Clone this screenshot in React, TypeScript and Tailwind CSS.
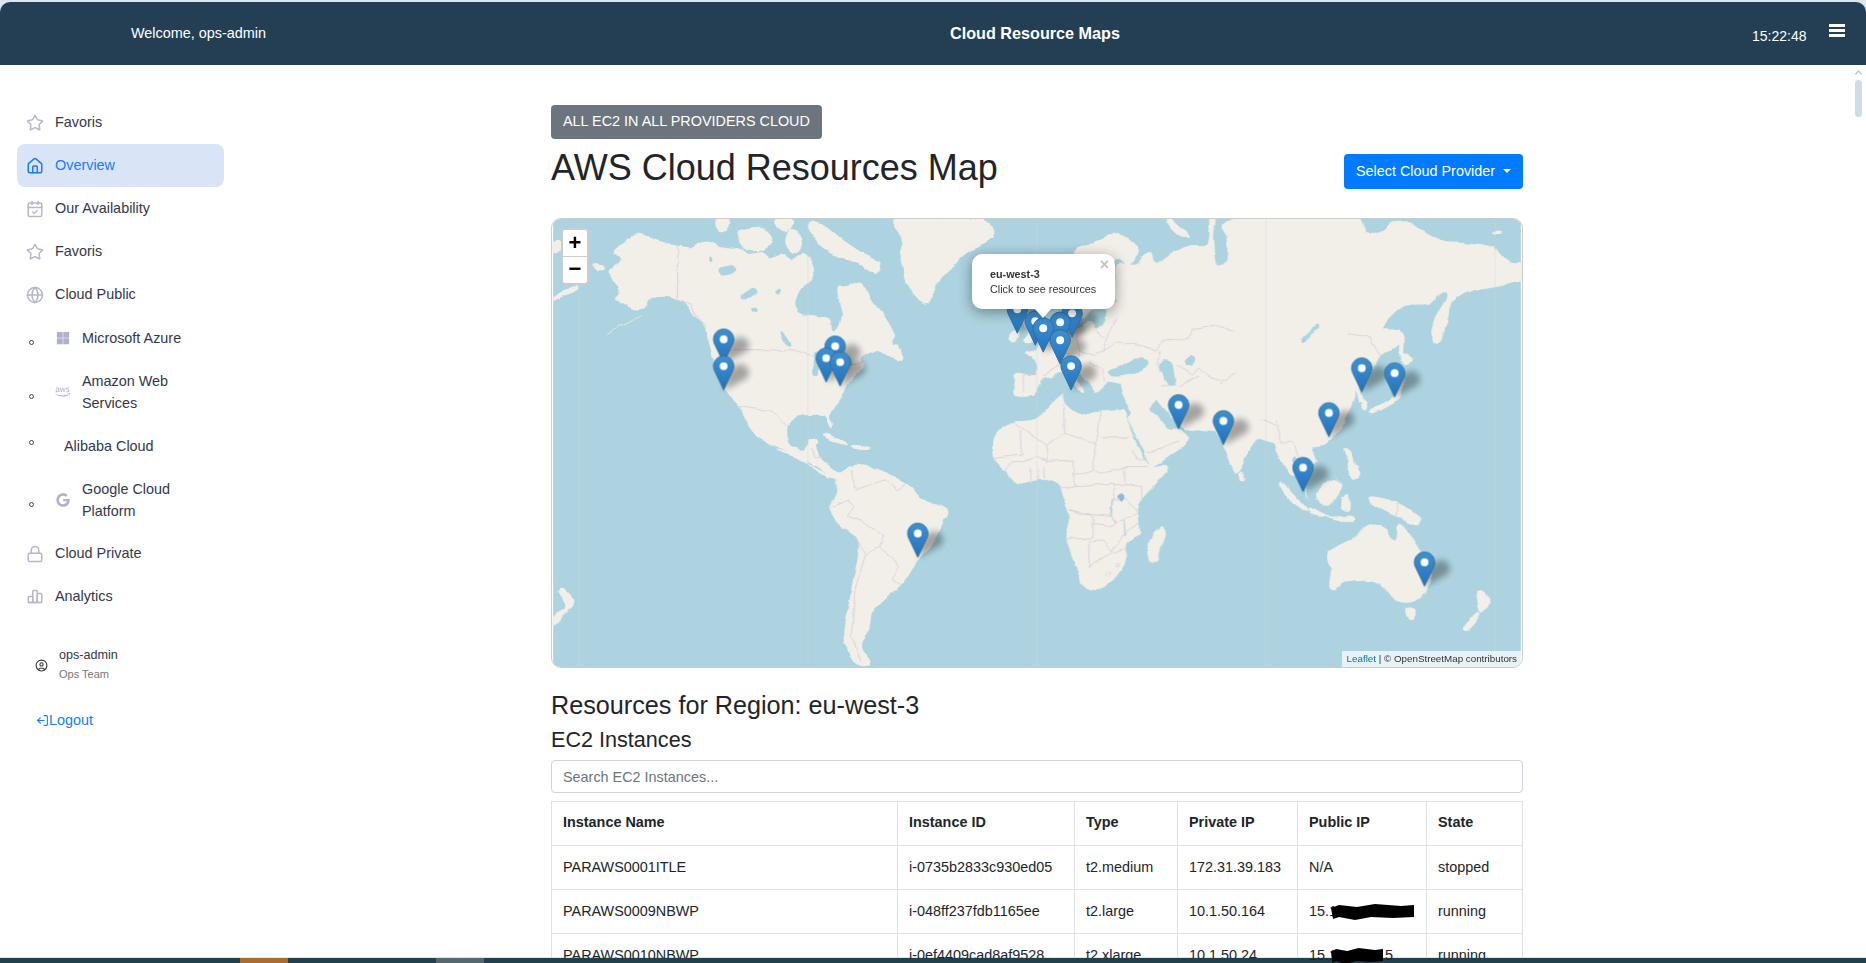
import { Star, House, CalendarCheck, Globe, Lock, CircleUser, LogOut, ChevronUp } from "lucide-react";
import { TbChartBar } from "react-icons/tb";
import { FaAws, FaGoogle, FaMicrosoft } from "react-icons/fa";
import type { ReactNode } from "react";

const LAND = "#f2efe9";
const WATER = "#acd3df";
const BORDER = "#d8c9d6";

// runs a rounded curve through the traced points, tangents clamped so short segments don't loop
function smooth(d: string) {
  const p = d.split(" ").map((s) => s.split(",").map(Number));
  const n = p.length;
  const dist = (a: number[], b: number[]) => Math.hypot(a[0] - b[0], a[1] - b[1]) || 1;
  const tan = (i: number) => {
    const a = p[(i + n - 1) % n];
    const b = p[i];
    const c = p[(i + 1) % n];
    const len = dist(a, c);
    const k = Math.min(dist(a, b), dist(b, c)) / 3;
    return [((c[0] - a[0]) / len) * k, ((c[1] - a[1]) / len) * k];
  };
  let out = `M${p[0][0]} ${p[0][1]}`;
  for (let i = 0; i < n; i++) {
    const j = (i + 1) % n;
    const t1 = tan(i);
    const t2 = tan(j);
    out += `C${p[i][0] + t1[0]} ${p[i][1] + t1[1]} ${p[j][0] - t2[0]} ${p[j][1] - t2[1]} ${p[j][0]} ${p[j][1]}`;
  }
  return out + "Z";
}

function Land({ d, fill = LAND }: { d: string; fill?: string }) {
  return <path d={smooth(d)} fill={fill} />;
}

function Line({ d, color = BORDER }: { d: string; color?: string }) {
  return <polyline points={d} fill="none" stroke={color} strokeWidth={0.8} vectorEffect="non-scaling-stroke" />;
}

// traced from the map in three coordinate frames, hence the groups
function WorldMap() {
  const pins: [number, number][] = [
    [1072, 337], [1017, 333], [1035, 345], [1060, 346], [722, 363], [1060, 364], [834, 370], [825, 382],
    [839, 386], [722, 390], [1071, 390], [1363, 392], [1043, 352], [1396, 397], [1179, 429], [1330, 437],
    [1224, 445], [1304, 492], [917, 558], [1426, 587],
  ].sort((a, b) => a[1] - b[1]) as [number, number][];

  return (
    <svg viewBox="0 0 972 450" className="block h-full w-full">
      <defs>
        <linearGradient id="pinFill" x1="0" y1="0" x2="0" y2="1">
          <stop offset="0" stopColor="#3f90d0" />
          <stop offset="1" stopColor="#2273bd" />
        </linearGradient>
        <filter id="shadowBlur" x="-80%" y="-80%" width="260%" height="260%">
          <feGaussianBlur stdDeviation="3.6" />
        </filter>
        <filter id="soft" x="-2%" y="-2%" width="104%" height="104%">
          <feTurbulence type="fractalNoise" baseFrequency="0.07" numOctaves="3" seed="4" result="n" />
          <feDisplacementMap in="SourceGraphic" in2="n" scale="5" xChannelSelector="R" yChannelSelector="G" />
          <feGaussianBlur stdDeviation="0.3" />
        </filter>
      </defs>
      <rect width="972" height="450" fill={WATER} />

      <g filter="url(#soft)">
        {/* Americas, Greenland */}
        <g transform="scale(.3333)">
          <Land d="180,95 215,70 255,42 300,60 345,72 375,80 420,85 440,72 470,68 500,82 525,88 565,90 590,105 630,100 655,115 690,105 730,130 770,130 800,170 880,205 925,190 965,250 1000,295 1030,350 1020,375 1050,422 1000,405 975,395 925,422 938,445 905,480 880,510 870,540 835,590 842,630 825,600 810,590 740,595 705,625 712,675 760,695 775,665 795,700 810,725 860,760 900,745 870,790 800,750 745,720 690,695 640,670 600,640 560,565 520,520 490,450 460,340 425,290 400,255 375,245 345,235 300,240 270,270 240,270 190,240 200,220 170,160 205,125" />
          <Land d="730,255 745,210 780,180 800,130 870,135 905,180 860,200 862,250 870,290 850,335 835,300 790,295 750,285" fill={WATER} />
          <Land d="770,10 820,20 870,60 930,100 985,130 975,165 930,140 880,120 830,100 790,60" />
          <Land d="720,130 760,100 780,150 740,170" />
          <Land d="560,35 625,25 660,60 635,92 585,95 560,70" />
          <Land d="490,5 530,0 510,40" />
          <Land d="670,5 720,0 700,40" />
          <Land d="720,30 750,70 730,100 700,75" />
          <Land d="1010,390 1040,380 1050,425 1020,410" />
          <Land d="1030,0 1050,60 1045,130 1070,200 1120,255 1160,190 1240,110 1290,80 1330,40 1290,0" />
          <Land d="0,70 35,70 35,88 0,105" />
          <Land d="0,245 15,225 70,198 75,212 25,232" />
          <Land d="120,135 150,140 155,155 130,155" />
          <Land d="500,150 540,140 550,160 510,170" fill={WATER} />
          <Land d="565,235 600,208 615,215 590,240" fill={WATER} />
          <Land d="685,340 700,345 718,382 698,372" fill={WATER} />
          <Land d="790,400 808,415 800,470 784,468" fill={WATER} />
          <Land d="848,405 885,410 900,440 860,450" fill={WATER} />
          <Land d="600,268 615,265 612,278" fill={WATER} />
          <Land d="670,215 685,212 680,225" fill={WATER} />
          <Land d="470,120 482,118 478,130" fill={WATER} />
          <Line d="160,350 205,322 270,290" color={LAND} />
          <Line d="375,80 375,245 415,255 430,290 460,330" />
          <Line d="535,397 730,397 780,410 840,430 885,445 925,430 940,420 935,445" />
          <Line d="560,565 620,575 650,575 680,600 705,625" />
          <Line d="750,700 775,690 790,720 815,715" />
          <Line d="760,670 755,720" />
        </g>
        <g transform="translate(-11,212) scale(.357,.3333)">
          <Land d="600,0 640,45 720,70 770,30 740,85 790,125 830,135 820,145 780,130 730,90 670,65 620,20" />
          <Land d="830,135 880,105 950,120 1030,165 1060,200 1140,240 1130,280 1100,340 1060,385 1030,440 990,485 960,520 930,540 920,600 900,650 925,705 880,705 850,620 870,480 890,340 830,280 810,235 830,190" />
          <Land d="790,15 825,20 860,42 830,36" />
          <Land d="870,45 920,55 880,57" />
          <Land d="50,480 90,515 70,545 35,590 35,555 65,530" />
          <Line d="870,120 880,180 965,150 1000,180 1025,160" />
          <Line d="810,235 860,210 880,235 860,260 900,275 960,320 950,350 990,390 1005,415 985,450 1010,470" />
          <Line d="890,340 910,375 950,350" />
          <Line d="910,375 880,480 870,620 895,700" />
        </g>

        {/* Eurasia */}
        <g transform="translate(409,0) scale(.3333)">
          <Land d="163,465 225,470 230,440 215,415 195,405 225,395 240,375 290,360 330,345 350,330 390,310 410,330 430,310 440,280 430,260 470,250 465,230 470,140 520,135 540,130 570,100 590,135 640,100 690,80 745,70 750,-10 770,-10 765,60 775,140 800,125 805,60 790,15 860,-10 1200,-10 1200,480 1105,645 740,640 680,620 640,600 590,545 570,510 575,500 530,505 445,490 430,505 420,515 405,520 385,490 350,455 335,465 370,510 370,525 345,505 325,470 300,465 270,480 250,475 235,505 215,530 165,530 160,500" />
          <Land d="340,100 400,70 470,45 540,90 510,135 470,120 450,160 470,240 400,270 370,300 340,280" />
          <Land d="445,460 490,440 530,420 570,435 530,462 470,472" fill={WATER} />
          <Land d="595,440 620,425 640,440 650,510 640,525 610,470" fill={WATER} />
          <Land d="680,420 705,415 700,440 680,440" fill={WATER} />
          <Land d="1030,370 1075,315 1065,350 1040,372" fill={WATER} />
          <Land d="630,-5 690,50 665,55 620,15" />
          <Land d="170,280 215,290 235,360 190,375 205,340" />
          <Land d="150,345 175,335 170,365 150,365" />
          <Land d="0,12 50,20 65,45 30,90 0,110" />
          <Line d="590,395 610,365 690,360 700,330 770,320 830,340 850,375 900,395 950,385 990,365 1060,385 1100,380 1130,400 1155,345 1200,350" />
          <Line d="900,395 925,440 975,465 1040,480 1100,465 1120,430 1160,430 1130,400" />
          <Line d="590,440 600,395" />
          <Line d="650,440 700,470 720,450 760,480 800,490 900,395" />
          <Line d="585,500 650,510 680,490 720,470" />
          <Line d="650,510 660,580 690,590 750,590 770,530 790,490" />
          <Line d="750,590 790,590 840,580 920,610 990,590 1040,620 1080,640" />
          <Line d="575,510 600,570 650,600" />
          <Line d="430,400 470,370 540,380 590,395" />
          <Line d="410,335 440,360 430,400 400,410 360,400 350,430" />
          <Line d="360,400 350,360 350,335" />
          <Line d="290,400 330,410 300,440 250,470" />
          <Line d="300,440 350,440" />
          <Line d="230,465 190,470 190,520" />
          <Line d="390,430 430,450 430,490" />
          <Line d="470,300 450,340 440,360" />
        </g>
        <g transform="translate(549,-128) scale(.357,.3333)">
          <Land d="400,370 700,370 760,430 830,390 880,400 930,430 970,450 1040,455 1110,470 1150,510 1200,520 1200,565 1110,590 1060,600 1000,625 975,700 945,760 940,690 975,610 925,640 850,650 800,710 845,720 840,760 790,800 760,850 730,880 740,930 725,935 715,880 680,880 660,910 695,900 665,935 690,1000 640,1050 600,1075 400,1000" />
          <Land d="760,960 825,920 835,880 850,850 848,920 810,950 770,970" />
          <Land d="735,930 755,940 745,960" />
          <Land d="850,790 880,800 860,825" />
          <Land d="845,725 855,740 850,810 842,770" />
          <Land d="1105,425 1130,420 1125,432" />
          <Land d="612,700 594,732 570,754 586,728" fill={WATER} />
          <Line d="700,730 760,740 790,800" />
        </g>

        {/* Africa, Arabia, South Asia */}
        <g transform="translate(379,182) scale(.3333)">
          <Land d="190,118 220,79 255,64 320,54 390,-16 400,-21 405,9 440,39 510,34 580,29 590,50 620,130 650,185 675,200 715,200 690,240 640,295 625,320 630,370 630,400 590,435 595,470 575,510 550,545 510,565 465,570 440,505 410,420 420,360 410,320 395,285 385,255 345,240 300,245 260,250 225,215 190,175" />
          <Land d="590,0 600,40 595,60 640,150 655,185 670,200 720,170 778,120 755,90 745,85 720,85 690,50 660,30 690,-60 580,-60" />
          <Land d="720,40 775,90 845,90 880,135 915,220 935,210 945,175 985,120 1010,110 1030,110 1045,165 1085,225 1100,225 1090,180 1100,170 1120,230 1135,295 1140,300 1125,230 1135,200 1165,185 1150,130 1195,105 1200,-40 720,-40" />
          <Land d="688,45 720,80 745,78 735,60 700,38" fill={WATER} />
          <Land d="700,380 708,400 685,480 665,490 653,460 660,420" />
          <Land d="935,215 948,240 935,242" />
          <Line d="255,70 350,135 405,100 400,10" />
          <Line d="405,100 500,130 515,30" />
          <Line d="515,110 600,110" />
          <Line d="500,130 490,170 495,210 430,225 430,180 350,185 350,135" />
          <Line d="270,90 275,165 230,170 190,175" />
          <Line d="495,210 510,220 575,210 600,200 655,200" />
          <Line d="605,150 620,175 650,185" />
          <Line d="600,200 580,215 590,255 640,260 640,295" />
          <Line d="390,265 430,260 460,260 550,250 590,255" />
          <Line d="430,225 440,260" />
          <Line d="550,250 550,300 540,350 490,345 470,345 420,330" />
          <Line d="420,330 450,345 490,350 490,415 410,420" />
          <Line d="480,430 475,500 540,465 570,420 575,410 630,370" />
          <Line d="490,375 540,380 580,360 625,340 590,300 550,300" />
          <Line d="480,425 520,425 550,460 590,445" />
          <Line d="225,215 240,190 280,185 320,170 350,180" />
          <Line d="300,205 300,245" />
          <Line d="325,205 330,240" />
          <Line d="345,195 345,235" />
          <Line d="650,155 690,150 720,130 750,120" />
          <Line d="1040,60 1060,130 1095,125 1110,175" />
          <Line d="1000,60 1040,80" />
          <Land d="565,290 582,285 580,305 565,300" fill="#86bdd6" />
          <Line d="548,300 545,350 560,370" color="#9cbfdc" />
          <Line d="585,360 585,410" color="#9cbfdc" />
          <circle cx="537" cy="525" r="8" fill="none" stroke={BORDER} strokeWidth="2" />
          <circle cx="562" cy="497" r="5" fill="none" stroke={BORDER} strokeWidth="2" />
        </g>

        {/* Southeast Asia, Oceania */}
        <g transform="translate(549,212) scale(.357,.3333)">
          <Land d="610,190 650,150 680,170 650,225 620,220" />
          <Land d="508,155 540,185 585,240 560,235 530,205" />
          <Land d="585,240 650,260 720,270 650,265" />
          <Land d="680,205 700,195 705,240 680,235" />
          <Land d="690,55 715,90 730,130 705,145 700,95" />
          <Land d="760,200 840,220 905,275 835,260 770,228" />
          <Land d="640,370 720,320 760,285 800,295 830,330 845,280 900,360 935,440 905,500 870,520 830,510 800,475 760,455 690,460 650,480 650,420" />
          <Land d="860,540 885,540 875,570" />
          <Land d="1065,485 1100,515 1080,545 1070,545" />
          <Land d="1065,545 1020,595 1035,605 1065,565" />
          <Line d="835,222 835,262" />
        </g>
      </g>

      {/* tile seams */}
      {[26, 256, 486, 716, 946].map((x) => (
        <line key={x} x1={x} y1="0" x2={x} y2="450" stroke="#cfd8dc" strokeWidth="0.8" opacity="0.5" />
      ))}

      {pins.map(([x, y]) => (
        <g key={`s${x}-${y}`} transform={`translate(${x - 551 - 10.5},${y - 218 - 35}) scale(.86)`}>
          <path d="M13 41 L40 26 Q46 16 34 10 Q24 10 17 20 Z" fill="#000" opacity="0.32" filter="url(#shadowBlur)" />
        </g>
      ))}
      {pins.map(([x, y]) => (
        <g key={`${x}-${y}`} transform={`translate(${x - 551 - 10.5},${y - 218 - 35}) scale(.86)`}>
          <path
            d="M12.5 .6C5.9 .6 .6 5.9 .6 12.5c0 2.3.7 4.6 1.8 6.7L12.5 40.4l10.1-21.2c1.1-2.1 1.8-4.4 1.8-6.7C24.4 5.9 19.1 .6 12.5 .6Z"
            fill="url(#pinFill)"
            stroke="#2e6c97"
            strokeWidth="1"
          />
          <circle cx="12.5" cy="12.5" r="4.6" fill="#fff" />
        </g>
      ))}
    </svg>
  );
}

function Bullet({ className }: { className: string }) {
  return <span className={`h-[5px] w-[5px] shrink-0 rounded-full border border-[#444] ${className}`} />;
}

function NavItem({ icon, label, active }: { icon: ReactNode; label: string; active?: boolean }) {
  return (
    <a
      className={`flex h-[43px] w-[207px] items-center gap-[11px] rounded-lg px-[9px] text-[14.4px] ${
        active ? "bg-[#d9e5f6] text-[#1a7cff]" : "text-[#33374a]"
      }`}
    >
      <span className={`flex w-[18px] justify-center ${active ? "text-[#1a7cff]" : "text-[#b6b7cb]"}`}>{icon}</span>
      {label}
    </a>
  );
}

function SubItem({ icon, label, bullet, tall }: { icon?: ReactNode; label: ReactNode; bullet: string; tall?: boolean }) {
  return (
    <a className={`flex ${tall ? "h-[65px]" : "h-[43px]"} items-center pl-[12px] text-[14.4px] leading-[22px] text-[#33374a]`}>
      <Bullet className={bullet} />
      {icon ? (
        <>
          <span className="ml-[21px] flex w-[15px] justify-center text-[#b0b1c8]">{icon}</span>
          <span className="ml-[12px]">{label}</span>
        </>
      ) : (
        <span className="ml-[30px]">{label}</span>
      )}
    </a>
  );
}

function Sidebar() {
  const ic = { size: 18, strokeWidth: 2 };
  return (
    <aside className="w-[224px] shrink-0 pl-[17px] pt-[36px]">
      <NavItem icon={<Star {...ic} />} label="Favoris" />
      <NavItem icon={<House {...ic} />} label="Overview" active />
      <NavItem icon={<CalendarCheck {...ic} />} label="Our Availability" />
      <NavItem icon={<Star {...ic} />} label="Favoris" />
      <NavItem icon={<Globe {...ic} />} label="Cloud Public" />
      <SubItem bullet="mt-[10px]" icon={<FaMicrosoft size={14} />} label="Microsoft Azure" />
      <SubItem bullet="mt-[10px]" tall icon={<FaAws size={16} />} label={<>Amazon Web<br />Services</>} />
      <SubItem bullet="-mt-[6px]" label="Alibaba Cloud" />
      <SubItem bullet="mt-[10px]" tall icon={<FaGoogle size={14} />} label={<>Google Cloud<br />Platform</>} />
      <NavItem icon={<Lock {...ic} />} label="Cloud Private" />
      <NavItem icon={<TbChartBar size={19} />} label="Analytics" />

      <div className="mt-[28px] flex items-center gap-[11px] pl-[18px]">
        <CircleUser size={13} strokeWidth={2} className="text-[#333]" />
        <div>
          <div className="text-[12.6px] leading-[19px] text-[#33374a]">ops-admin</div>
          <div className="text-[11px] leading-[19px] text-[#777]">Ops Team</div>
        </div>
      </div>
      <a className="mt-[26px] flex items-center pl-[19px] text-[14.4px] text-[#1a7cff]">
        <LogOut size={13} strokeWidth={2} className="-scale-x-100" />
        Logout
      </a>
    </aside>
  );
}

const rows = [
  { name: "PARAWS0001ITLE", id: "i-0735b2833c930ed05", type: "t2.medium", priv: "172.31.39.183", pub: "N/A", state: "stopped" },
  { name: "PARAWS0009NBWP", id: "i-048ff237fdb1165ee", type: "t2.large", priv: "10.1.50.164", pub: "15.1", state: "running", blob: 83 },
  { name: "PARAWS0010NBWP", id: "i-0ef4409cad8af9528", type: "t2.xlarge", priv: "10.1.50.24", pub: "15.1", tail: "5", state: "running", blob: 52 },
];

function App() {
  const th = "h-[44px] border border-[#dee2e6] px-[11px] pb-[2px] text-left text-[14.4px] font-bold text-[#212529]";
  const td = "h-[44px] border border-[#dee2e6] px-[11px] text-[14.4px] text-[#212529]";
  return (
    <div className="flex h-screen w-full flex-col overflow-hidden bg-[#dce6ef] pt-[2px] font-['Liberation_Sans',sans-serif]">
      <header className="flex h-[63px] shrink-0 items-center rounded-t-[10px] bg-[#243f53] text-white">
        <div className="mt-[1px] w-[950px] pl-[131px] text-[14.4px]">Welcome, ops-admin</div>
        <div className="w-[802px] text-[16.2px] font-bold">Cloud Resource Maps</div>
        <div className="mt-[5px] w-[77px] text-sm">15:22:48</div>
        <div className="-mt-[6px] flex w-[16px] flex-col gap-[2.5px]">
          <span className="h-[2.5px] bg-white" />
          <span className="h-[2.5px] bg-white" />
          <span className="h-[2.5px] bg-white" />
        </div>
      </header>

      <div className="flex min-h-0 flex-1 bg-white">
        <Sidebar />
        <main className="ml-[327px] w-[972px] shrink-0 pt-[40px]">
          <div className="flex h-[34px] w-[271px] items-center rounded bg-[#6c757d] px-3 pb-[1px] text-[14.4px] uppercase text-white">
            All EC2 in all providers cloud
          </div>
          <div className="flex h-[79px] items-start justify-between">
            <h1 className="mt-[1px] text-4xl leading-[56px] text-[#212529]">AWS Cloud Resources Map</h1>
            <button className="mt-[15px] flex h-[35px] w-[179px] items-center justify-center gap-2 rounded bg-[#007bff] text-[14.4px] text-white">
              Select Cloud Provider
              <span className="-mt-[2px] border-x-[4px] border-t-[4px] border-x-transparent border-t-white" />
            </button>
          </div>

          <div className="relative h-[450px] overflow-hidden rounded-[10px] border border-[#ccc]">
            <WorldMap />
            <div className="absolute left-[9px] top-[9px] w-[28px] rounded border-2 border-black/20 bg-white text-center font-bold text-black">
              <div className="h-[27px] border-b border-[#ccc] text-[22px] leading-[25px]">+</div>
              <div className="h-[26px] text-[22px] leading-[24px]">−</div>
            </div>
            <div className="absolute left-[420px] top-[35px] h-[55px] w-[143px] rounded-[10px] bg-white pl-[18px] pt-[13px] text-[10.8px] leading-[15px] text-[#333] shadow-[0_3px_14px_rgba(0,0,0,0.4)]">
              <div className="font-bold">eu-west-3</div>
              <div>Click to see resources</div>
              <span className="absolute right-[6px] top-[2px] text-[16px] font-bold leading-[18px] text-[#c3c3c3]">×</span>
            </div>
            <div className="absolute left-[483px] top-[90px] border-x-[8px] border-t-[9px] border-x-transparent border-t-white" />
            <div className="absolute bottom-0 right-0 flex h-[16px] items-center bg-white/70 px-[5px] text-[9.8px] text-[#333]">
              <span className="text-[#0078a8]">Leaflet</span>&nbsp;| © OpenStreetMap contributors
            </div>
          </div>

          <h2 className="mt-[21px] text-[25.2px] leading-8 text-[#212529]">Resources for Region: eu-west-3</h2>
          <h3 className="mt-[5px] text-[21.6px] leading-7 text-[#212529]">EC2 Instances</h3>
          <input
            placeholder="Search EC2 Instances..."
            className="mt-[6px] h-[33px] w-full rounded border border-[#ced4da] px-[11px] text-[14.4px] placeholder:text-[#6c757d]"
          />
          <table className="mt-[8px] w-full table-fixed border-collapse">
            <colgroup>
              <col className="w-[346px]" />
              <col className="w-[177px]" />
              <col className="w-[103px]" />
              <col className="w-[120px]" />
              <col className="w-[129px]" />
              <col />
            </colgroup>
            <thead>
              <tr>
                {["Instance Name", "Instance ID", "Type", "Private IP", "Public IP", "State"].map((h) => (
                  <th key={h} className={th}>{h}</th>
                ))}
              </tr>
            </thead>
            <tbody>
              {rows.map((r) => (
                <tr key={r.name}>
                  <td className={td}>{r.name}</td>
                  <td className={td}>{r.id}</td>
                  <td className={td}>{r.type}</td>
                  <td className={td}>{r.priv}</td>
                  <td className={`${td} relative whitespace-nowrap`}>
                    {r.pub}
                    {r.blob && (
                      <svg viewBox="0 0 83 16" preserveAspectRatio="none" className="absolute left-[33px] top-[14px] h-[16px]" style={{ width: r.blob }}>
                        <path d="M0 4 L8 1 L26 3 L44 0 L70 2 L83 1 L83 13 L62 14 L40 13 L24 16 L8 13 L2 15Z" fill="#000" />
                      </svg>
                    )}
                    {r.tail && <span className="absolute left-[87px]">{r.tail}</span>}
                  </td>
                  <td className={td}>{r.state}</td>
                </tr>
              ))}
            </tbody>
          </table>
        </main>

        <div className="ml-auto mr-[4px] flex w-[8px] flex-col items-center pt-[2px]">
          <ChevronUp size={11} strokeWidth={3} className="shrink-0 text-[#bbb]" />
          <span className="mt-[2px] h-[37px] w-[7px] rounded bg-[#cfdbe5]" />
        </div>
      </div>

      <div className="mt-[1px] flex h-[5px] shrink-0 bg-[#22404c]">
        <span className="ml-[240px] w-[48px] bg-[#a86c34]" />
        <span className="ml-[148px] w-[48px] bg-[#55686f]" />
      </div>
    </div>
  );
}

export default App;
